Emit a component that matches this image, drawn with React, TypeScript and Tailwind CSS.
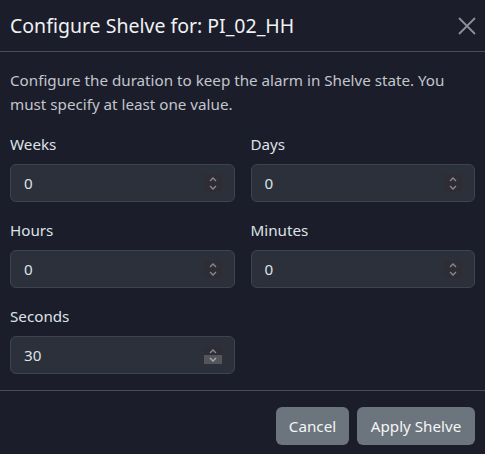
function Spinner({ hover }: { hover?: boolean }) {
  return (
    <div className="flex flex-col w-[18px] h-[18px]">
      <div className="flex-1 bg-[#2e2d35] flex items-center justify-center">
        <svg width="10" height="6" viewBox="0 0 10 6">
          <path d="M2 5 L5 2 L8 5" fill="none" stroke="#8a8a90" strokeWidth="1.3" />
        </svg>
      </div>
      <div className={`flex-1 flex items-center justify-center ${hover ? "bg-[#55555c]" : "bg-[#2e2d35]"}`}>
        <svg width="10" height="6" viewBox="0 0 10 6">
          <path d="M2 1 L5 4 L8 1" fill="none" stroke={hover ? "#a9a9ae" : "#8a8a90"} strokeWidth="1.3" />
        </svg>
      </div>
    </div>
  );
}

function Field({ label, value, hover }: { label: string; value: string; hover?: boolean }) {
  return (
    <div>
      <label className="block mb-2 leading-6">{label}</label>
      <div className="h-[38px] flex items-center justify-between pl-[13px] pr-[12px] bg-[#2b303b] border border-[#3d4351] rounded-md">
        <span className="leading-6">{value}</span>
        <Spinner hover={hover} />
      </div>
    </div>
  );
}

export default function App() {
  return (
    <div
      className="w-[485px] h-[454px] bg-[#1b1d2a] text-[#dee2e6] text-[15.2px] overflow-hidden"
      style={{ fontFamily: '"Noto Sans", sans-serif' }}
    >
      {/* header */}
      <div className="h-[52px] px-[10px] flex items-center justify-between border-b border-[#4a4e5b]">
        <h1 className="text-[19.5px] leading-6 text-[#f1f2f4]">Configure Shelve for: PI_02_HH</h1>
        <svg width="18" height="18" viewBox="0 0 18 18" className="mr-[-1px]">
          <path d="M1 1 L17 17 M17 1 L1 17" stroke="#8e9099" strokeWidth="1.8" />
        </svg>
      </div>

      {/* body */}
      <div className="px-[10px] pt-[16px] pb-4 border-b border-[#4a4e5b]">
        <p className="leading-6 mb-4 text-[#c3c6cd]">
          Configure the duration to keep the alarm in Shelve state. You must specify at least one value.
        </p>
        <div className="grid grid-cols-2 gap-x-4 gap-y-4">
          <Field label="Weeks" value="0" />
          <Field label="Days" value="0" />
          <Field label="Hours" value="0" />
          <Field label="Minutes" value="0" />
          <Field label="Seconds" value="30" hover />
        </div>
      </div>

      {/* footer */}
      <div className="px-[10px] pt-4 flex justify-end gap-2">
        <button className="h-[38px] w-[73px] rounded-md bg-[#6c757d] text-[#f4f5f6]">Cancel</button>
        <button className="h-[38px] w-[118px] rounded-md bg-[#6c757d] text-[#f4f5f6]">Apply Shelve</button>
      </div>
    </div>
  );
}
